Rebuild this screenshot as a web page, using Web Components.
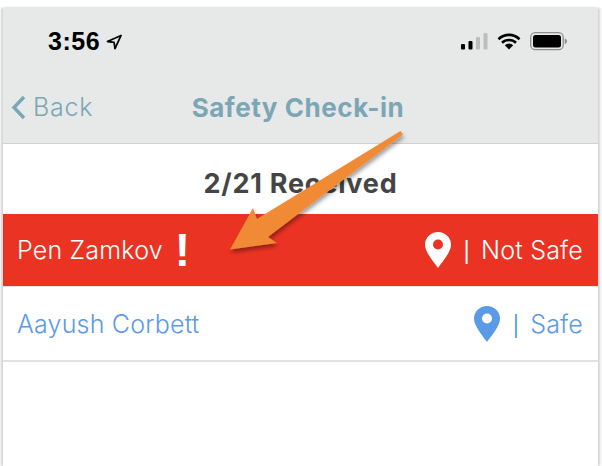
<!DOCTYPE html>
<html>
<head>
<meta charset="utf-8">
<title>Safety Check-in</title>
<style>
    html, body { margin: 0; background: #fff; }
    body { width: 602px; height: 466px; overflow: hidden; font-family: "Inter", "Liberation Sans", sans-serif; }
</style>
</head>
<body>
<phone-frame>
    <status-bar></status-bar>
    <nav-bar heading="Safety Check-in"></nav-bar>
    <received-count>2/21 Received</received-count>
    <check-in-row name="Pen Zamkov" status="Not Safe" alert></check-in-row>
    <check-in-row name="Aayush Corbett" status="Safe"></check-in-row>
</phone-frame>
<callout-arrow></callout-arrow>
<script>
class PhoneFrame extends HTMLElement {
    constructor() {
        super();
        this.attachShadow({ mode: 'open' }).innerHTML = `
            <style>
                :host {
                    display: block;
                    box-sizing: border-box;
                    width: 602px;
                    height: 466px;
                    padding: 8px 4px 0 3px;
                    background: #fff;
                }
                .screen {
                    display: flex;
                    flex-direction: column;
                    height: 100%;
                    box-shadow: -2px 0 2px #d4d4d4, 2px 0 2px #d4d4d4;
                    background: #fff;
                }
            </style>
            <div class="screen"><slot></slot></div>
        `;
    }
}

class StatusBar extends HTMLElement {
    constructor() {
        super();
        this.attachShadow({ mode: 'open' }).innerHTML = `
            <style>
                :host {
                    display: flex;
                    align-items: center;
                    justify-content: space-between;
                    box-sizing: border-box;
                    height: 65px;
                    padding: 2px 31px 0 45px;
                    background: #e7e9e9;
                    color: #000;
                }
                .time { display: flex; align-items: center; gap: 6px; }
                .clock { font: 700 25px/1 "Liberation Sans", sans-serif; letter-spacing: .5px; }
                .icons { display: flex; align-items: center; gap: 9px; }
                svg { display: block; }
            </style>
            <div class="time">
                <span class="clock">3:56</span>
                <svg width="16" height="16" viewBox="0 0 16 16"><path d="M15 1.500 1.500 7.500l6.600.8.9 6.400z" fill="none" stroke="#000" stroke-width="1.800" stroke-linejoin="round"/></svg>
            </div>
            <div class="icons">
                <svg width="27" height="17" viewBox="0 0 27 17">
                    <rect x="0" y="11" width="4" height="5.500" rx="1" fill="#000"/>
                    <rect x="7.500" y="8" width="4" height="8.500" rx="1" fill="#000"/>
                    <rect x="15" y="4" width="4" height="12.500" rx="1" fill="#bdbdbd"/>
                    <rect x="22.500" y="0" width="4" height="16.500" rx="1" fill="#bdbdbd"/>
                </svg>
                <svg width="24" height="17" viewBox="0 0 24 17">
                    <path d="M1.500 6.200a15 15 0 0 1 21 0M5 9.800a10 10 0 0 1 14 0" fill="none" stroke="#000" stroke-width="2.600"/>
                    <path d="M12 16.600 7.800 12.300a6 6 0 0 1 8.400 0z" fill="#000"/>
                </svg>
                <svg width="37" height="19" viewBox="0 0 37 19">
                    <rect x=".7" y=".7" width="32.500" height="17" rx="4.500" fill="none" stroke="#8e8e8e" stroke-width="1.300"/>
                    <rect x="3" y="3" width="28" height="12.500" rx="2.500" fill="#000"/>
                    <path d="M34.700 6.500c1.400.3 2.200 1.500 2.200 2.800s-.8 2.500-2.200 2.800z" fill="#8e8e8e"/>
                </svg>
            </div>
        `;
    }
}

class NavBar extends HTMLElement {
    constructor() {
        super();
        this.attachShadow({ mode: 'open' }).innerHTML = `
            <style>
                :host {
                    display: grid;
                    grid-template-columns: 1fr auto 1fr;
                    align-items: center;
                    height: 71px;
                    padding-bottom: 2px;
                    box-sizing: border-box;
                    background: #e7e9e9;
                    border-bottom: 1px solid #cfd2d2;
                    color: #7ba6b5;
                }
                .back { display: flex; align-items: center; gap: 7px; padding-left: 8px; font-size: 25px; font-weight: 300; letter-spacing: .8px; }
                h1 { margin: 0 5px 0 0; font-size: 26px; font-weight: 700; letter-spacing: .55px; white-space: nowrap; }
                svg { display: block; }
            </style>
            <div class="back">
                <svg width="15" height="25" viewBox="0 0 15 25"><path d="M13 2 3 12.500l10 10.500" fill="none" stroke="#7ba6b5" stroke-width="3.400"/></svg>
                <span>Back</span>
            </div>
            <h1></h1>
            <div></div>
        `;
        this.shadowRoot.querySelector('h1').textContent = this.getAttribute('heading');
    }
}

class ReceivedCount extends HTMLElement {
    constructor() {
        super();
        this.attachShadow({ mode: 'open' }).innerHTML = `
            <style>
                :host {
                    display: flex;
                    align-items: center;
                    justify-content: center;
                    height: 70px;
                    padding-top: 9px;
                    box-sizing: border-box;
                    font-size: 27px;
                    font-weight: 700;
                    letter-spacing: .75px;
                    color: #454545;
                }
            </style>
            <slot></slot>
        `;
    }
}

class CheckInRow extends HTMLElement {
    constructor() {
        super();
        const alert = this.hasAttribute('alert');
        this.attachShadow({ mode: 'open' }).innerHTML = `
            <style>
                :host {
                    display: flex;
                    align-items: center;
                    justify-content: space-between;
                    box-sizing: border-box;
                    height: 75px;
                    padding: 0 15px 0 14px;
                    font-size: 25px;
                    font-weight: 300;
                    letter-spacing: .2px;
                    color: #5b9ae6;
                    border-bottom: 2px solid #e2e2e2;
                }
                :host([alert]) { height: 73px; background: #eb3323; color: #fff; border-bottom: 1px solid #e6e6e6; }
                .side { display: flex; align-items: center; }
                .bang { margin-left: 12px; font: 700 46px/1 "Liberation Sans", sans-serif; }
                .pin { display: block; margin-right: 13px; }
                .bar { margin-right: 11px; font-family: "Lato", sans-serif; font-weight: 400; }
            </style>
            <div class="side">
                <span class="name"></span>
                ${alert ? '<span class="bang">!</span>' : ''}
            </div>
            <div class="side">
                <svg class="pin" width="26" height="36" viewBox="0 0 26 36">
                    <path d="M13 0C5.800 0 0 5.600 0 12.700 0 20 8.500 29.500 13 36c4.500-6.500 13-16 13-23.300C26 5.600 20.200 0 13 0z" fill="currentColor"/>
                    <circle cx="13" cy="12.500" r="5" fill="${alert ? '#eb3323' : '#fff'}"/>
                </svg>
                <span class="bar">|</span>
                <span class="status"></span>
            </div>
        `;
        this.shadowRoot.querySelector('.name').textContent = this.getAttribute('name');
        this.shadowRoot.querySelector('.status').textContent = this.getAttribute('status');
    }
}

class CalloutArrow extends HTMLElement {
    constructor() {
        super();
        this.attachShadow({ mode: 'open' }).innerHTML = `
            <style>
                :host { position: absolute; left: 0; top: 0; pointer-events: none; }
                svg { display: block; }
            </style>
            <svg width="602" height="466" viewBox="0 0 602 466">
                <defs>
                    <filter id="drop" x="-20%" y="-20%" width="140%" height="140%">
                        <feDropShadow dx="1" dy="3" stdDeviation="2" flood-color="#000" flood-opacity=".4"/>
                    </filter>
                </defs>
                <path d="M400.500 131 403 134.500 268 237 277 243 230 249.500 253 208 257 219z" fill="#f08a36" filter="url(#drop)"/>
            </svg>
        `;
    }
}

customElements.define('phone-frame', PhoneFrame);
customElements.define('status-bar', StatusBar);
customElements.define('nav-bar', NavBar);
customElements.define('received-count', ReceivedCount);
customElements.define('check-in-row', CheckInRow);
customElements.define('callout-arrow', CalloutArrow);
</script>
</body>
</html>
